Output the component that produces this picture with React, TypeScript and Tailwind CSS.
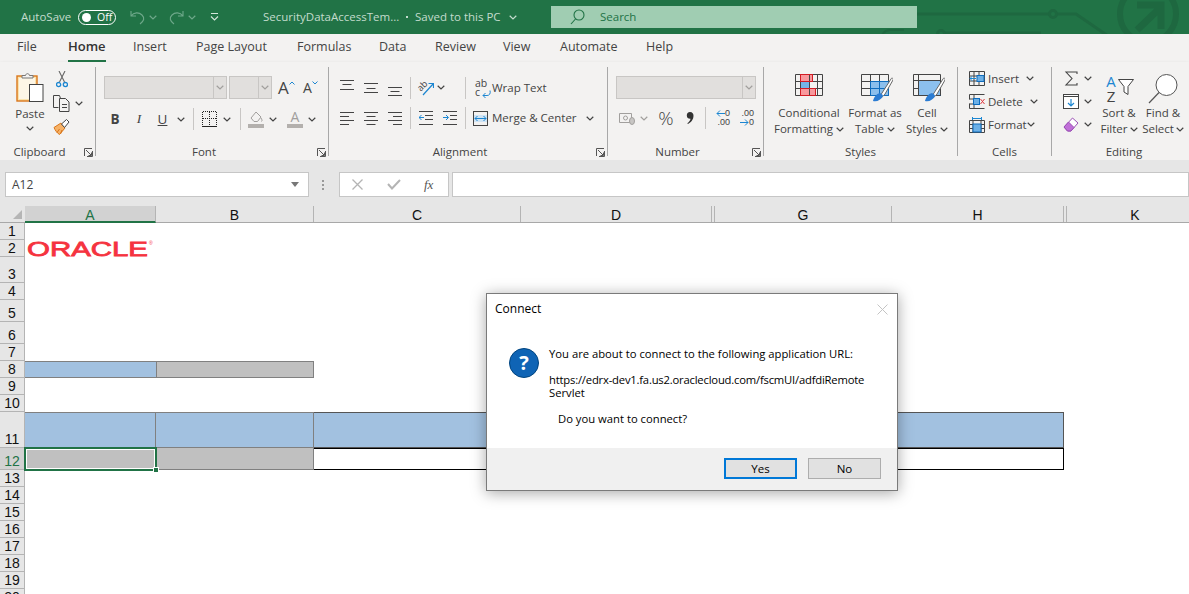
import type { ReactNode } from "react";

const UI = "font-['Open_Sans','Noto_Sans',sans-serif]";
const GRID = "font-['Liberation_Sans',Arial,sans-serif]";

function Chev({ className = "", color = "#444" }: { className?: string; color?: string }) {
  return (
    <span className={`flex shrink-0 items-center justify-center ${className}`}>
      <svg width="8" height="5" viewBox="0 0 8 5" fill="none">
        <path d="M.7.8 4 4l3.3-3.2" stroke={color} strokeWidth="1.2" />
      </svg>
    </span>
  );
}

function VSep({ className = "" }: { className?: string }) {
  return <span className={`h-[22px] w-px shrink-0 bg-[#c8c6c4] ${className}`} />;
}

function Launcher() {
  return (
    <svg width="9" height="9" viewBox="0 0 9 9" fill="none" stroke="#555">
      <path d="M.5 8V.5H8M8.5 3v5.5H3M2 2l5 5M4.500 7.500h3v-3" />
    </svg>
  );
}

function Group({
  className,
  label,
  launcher,
  children,
  last,
  footerClass = "",
}: {
  className: string;
  label: string;
  launcher?: boolean;
  children: ReactNode;
  last?: boolean;
  footerClass?: string;
}) {
  return (
    <div className={`flex h-[89px] shrink-0 flex-col ${last ? "" : "border-r border-[#a8a8a8]"} ${className}`}>
      <div className="h-[77px] shrink-0">{children}</div>
      <div className={`flex h-[16px] shrink-0 items-center text-[11.5px] leading-[16px] text-[#444] ${footerClass}`}>
        <span className="flex-1 text-center">{label}</span>
        {launcher && (
          <span className="flex w-[16px] justify-end pr-[2px]">
            <Launcher />
          </span>
        )}
      </div>
    </div>
  );
}

function Lines({ rows }: { rows: [number, number][] }) {
  return (
    <svg width="14" height="16" viewBox="0 0 14 16" stroke="#444" className="shrink-0">
      {rows.map(([y, w], i) => (
        <path key={i} d={`M${(14 - w) / 2} ${y + 0.5}h${w}`} />
      ))}
    </svg>
  );
}

function LeftLines() {
  return (
    <svg width="14" height="14" viewBox="0 0 14 14" stroke="#444" className="shrink-0">
      <path d="M0 1.500h14M0 5.500h9M0 9.500h14M0 13.500h9" />
    </svg>
  );
}

function RightLines() {
  return (
    <svg width="14" height="14" viewBox="0 0 14 14" stroke="#444" className="shrink-0">
      <path d="M0 1.500h14M5 5.500h9M0 9.500h14M5 13.500h9" />
    </svg>
  );
}

function PasteIcon() {
  return (
    <svg width="28" height="31" viewBox="0 0 28 31" fill="none">
      <rect x="1" y="4" width="20" height="25" fill="#fbe3ac" stroke="#d9761a" strokeWidth="1.4" />
      <rect x="3" y="6" width="16" height="21" fill="#fdf6e6" />
      <path d="M6 6V3.500h3.500C10 1 13 1 13.500 3.500H17V6z" fill="#f3f2f1" stroke="#777" />
      <rect x="13.500" y="12.500" width="13.500" height="17" fill="#fff" stroke="#444" />
    </svg>
  );
}

function CutIcon() {
  return (
    <svg width="12" height="17" viewBox="0 0 12 17" fill="none">
      <path d="M3 0l5.500 11M9 0 3.500 11" stroke="#666" strokeWidth="1.1" />
      <circle cx="2.600" cy="13.600" r="2.100" stroke="#1c86d1" strokeWidth="1.3" />
      <circle cx="9.400" cy="13.600" r="2.100" stroke="#1c86d1" strokeWidth="1.3" />
    </svg>
  );
}

function CopyIcon() {
  return (
    <svg width="17" height="17" viewBox="0 0 17 17" fill="none" stroke="#444">
      <path d="M5.500 12.500h-5V.5h6l1 3" />
      <path d="M6.500 3.500h6l3.500 3.500v9.500H6.500z" fill="#f3f2f1" />
      <path d="M9 9.500h5M9 12.500h5" />
    </svg>
  );
}

function PainterIcon() {
  return (
    <svg width="17" height="16" viewBox="0 0 17 16" fill="none">
      <path d="M1 8.500 8 4l4 5-5.500 6.500C4 14 2 11 1 8.500z" fill="#f7b267" stroke="#d9761a" />
      <path d="M4 13.500 6.500 10M7.500 15 9 11" stroke="#d9761a" />
      <path d="m8.500 5 5-4.500 2.500 2.500-4.500 5.500z" fill="#fff" stroke="#444" />
    </svg>
  );
}

function ClipboardGroup() {
  return (
    <Group className="w-[96px]" label="Clipboard" launcher>
      <div className="flex">
        <div className="ml-[14px] flex w-[32px] flex-col items-center pt-[5px] text-[11.5px] text-[#444]">
          <PasteIcon />
          <span className="mt-[3px] leading-[16px]">Paste</span>
          <Chev className="mt-[3px] h-[6px]" />
        </div>
        <div className="ml-[7px] flex w-[40px] flex-col">
          <div className="flex h-[24px] w-[17px] items-center justify-center">
            <CutIcon />
          </div>
          <div className="flex h-[24px] items-center">
            <CopyIcon />
            <Chev className="ml-[4px] w-[10px]" />
          </div>
          <div className="flex h-[24px] items-center">
            <PainterIcon />
          </div>
        </div>
      </div>
    </Group>
  );
}

function Combo({ className, drop }: { className: string; drop: string }) {
  return (
    <div className={`flex h-[23px] shrink-0 border border-[#c8c6c4] bg-[#e1dfdd] ${className}`}>
      <span className="flex-1" />
      <span className={`flex items-center justify-center border-l border-[#c8c6c4] ${drop}`}>
        <Chev color="#a19f9d" />
      </span>
    </div>
  );
}

function FontGroup() {
  return (
    <Group className="w-[233px]" label="Font" launcher>
      <div className="flex pl-[8px] pt-[9px]">
        <Combo className="w-[123px]" drop="w-[13px]" />
        <Combo className="ml-[2px] w-[43px]" drop="w-[13px]" />
        <span className="relative ml-[6px] w-[17px] text-[17px] leading-[23px] text-[#444]">
          A
          <svg width="6" height="4" viewBox="0 0 6 4" fill="none" stroke="#1c86d1" className="absolute right-[0px] top-[5px]">
            <path d="M.5 3.500 3 1l2.500 2.500" />
          </svg>
        </span>
        <span className="relative ml-[8px] w-[14px] text-[14px] leading-[24px] text-[#444]">
          A
          <svg width="6" height="4" viewBox="0 0 6 4" fill="none" stroke="#1c86d1" className="absolute right-[-1px] top-[5px]">
            <path d="M.5.5 3 3 5.500.5" />
          </svg>
        </span>
      </div>
      <div className="mt-[8px] flex h-[22px] items-center pl-[7px] text-[13.5px] text-[#444]">
        <span className="w-[24px] text-center font-bold">B</span>
        <span className="w-[24px] text-center font-['Liberation_Serif',serif] italic">I</span>
        <span className="w-[23px] text-center underline">U</span>
        <Chev className="w-[14px]" />
        <VSep className="ml-[5px]" />
        <svg width="15" height="16" viewBox="0 0 15 16" fill="none" stroke="#222" strokeDasharray="1 1" shapeRendering="crispEdges" className="ml-[8px] shrink-0">
          <path d="M.5.5h14M.5.5v14M14.5.5v14M.5 7.500h14M7.500.5v14" />
          <path d="M0 15.500h15" strokeDasharray="none" />
        </svg>
        <Chev className="ml-[5px] w-[10px]" />
        <VSep className="ml-[8px]" />
        <svg width="16" height="18" viewBox="0 0 16 18" fill="none" className="ml-[7px] shrink-0">
          <path d="M3 8 8 2l5 5-3.500 4.500H6z" stroke="#a19f9d" />
          <path d="M13 8c1 1.500 1.500 3 .5 3.500" stroke="#a19f9d" />
          <rect y="14" width="16" height="4" fill="#b3b0ad" />
        </svg>
        <Chev className="ml-[4px] w-[10px]" />
        <span className="relative ml-[9px] flex h-[18px] w-[16px] shrink-0 flex-col items-center">
          <span className="text-[14px] leading-[14px] text-[#a19f9d]">A</span>
          <span className="h-[4px] w-[16px] bg-[#b3b0ad]" />
        </span>
        <Chev className="ml-[4px] w-[10px]" />
      </div>
    </Group>
  );
}

function AlignmentGroup() {
  return (
    <Group className="w-[279px]" label="Alignment" launcher>
      <div className="flex h-[32px] items-center pl-[11px] pt-[9px] text-[11.5px] text-[#444]">
        <Lines rows={[[0, 14], [4, 9], [9, 14]]} />
        <span className="ml-[10px] shrink-0">
          <Lines rows={[[3, 14], [8, 9], [12, 14]]} />
        </span>
        <span className="ml-[10px] shrink-0">
          <Lines rows={[[7, 14], [11, 9], [15, 14]]} />
        </span>
        <VSep className="ml-[8px]" />
        <span className="relative ml-[7px] h-[16px] w-[16px] shrink-0">
          <span className="absolute left-[-1px] top-[1px] -rotate-45 text-[9px] leading-[10px] text-[#444]">ab</span>
          <svg width="16" height="16" viewBox="0 0 16 16" fill="none" className="absolute left-0 top-0">
            <path d="M5 15 15 4M10.500 3.500H15.500V8" stroke="#1c86d1" strokeWidth="1.2" />
          </svg>
        </span>
        <Chev className="ml-[2px] w-[10px]" />
        <VSep className="ml-[19px]" />
        <span className="relative ml-[9px] h-[18px] w-[15px] shrink-0 text-[10.5px] leading-[9px] text-[#444]">
          <span className="block">ab</span>
          <span className="block">c</span>
          <svg width="9" height="8" viewBox="0 0 9 8" fill="none" stroke="#1c86d1" className="absolute bottom-[-1px] right-[-1px]">
            <path d="M8 .5c.8 3-.5 5-3 5H1M3.500 3 1 5.500 3.500 8" />
          </svg>
        </span>
        <span className="ml-[2px] whitespace-nowrap">Wrap Text</span>
      </div>
      <div className="mt-[8px] flex h-[22px] items-center pl-[11px] text-[11.5px] text-[#444]">
        <LeftLines />
        <span className="ml-[10px] shrink-0">
          <svg width="14" height="14" viewBox="0 0 14 14" stroke="#444">
            <path d="M0 1.500h14M2.500 5.500h9M0 9.500h14M2.500 13.500h9" />
          </svg>
        </span>
        <span className="ml-[10px] shrink-0">
          <RightLines />
        </span>
        <VSep className="ml-[8px]" />
        <svg width="14" height="14" viewBox="0 0 14 14" fill="none" className="ml-[8px] shrink-0">
          <path d="M0 .5h14M6 4.500h8M6 8.500h8M0 13.500h14" stroke="#444" />
          <path d="M5 6.500H0M2.500 4 0 6.500 2.500 9" stroke="#1c86d1" />
        </svg>
        <svg width="14" height="14" viewBox="0 0 14 14" fill="none" className="ml-[10px] shrink-0">
          <path d="M0 .5h14M7 4.500h7M7 8.500h7M0 13.500h14" stroke="#444" />
          <path d="M0 6.500h5M3 4l2.500 2.500L3 9" stroke="#1c86d1" />
        </svg>
        <VSep className="ml-[8px]" />
        <svg width="15" height="15" viewBox="0 0 15 15" fill="none" className="ml-[7px] shrink-0">
          <rect x=".5" y=".5" width="14" height="14" stroke="#444" />
          <rect x="1" y="4" width="13" height="7" fill="#cfe4f5" />
          <path d="M2 7.500h11M4.500 5 2 7.500 4.500 10M10.500 5 13 7.500 10.500 10" stroke="#1c86d1" />
        </svg>
        <span className="ml-[4px] w-[85px] shrink-0 whitespace-nowrap">Merge &amp; Center</span>
        <Chev className="ml-[8px] w-[10px]" />
      </div>
    </Group>
  );
}

function NumberGroup() {
  return (
    <Group className="w-[156px]" label="Number" launcher>
      <div className="flex pl-[8px] pt-[9px]">
        <Combo className="w-[140px]" drop="w-[13px]" />
      </div>
      <div className="mt-[8px] flex h-[22px] items-center pl-[11px] text-[#444]">
        <svg width="16" height="14" viewBox="0 0 16 14" fill="none" stroke="#a19f9d" className="shrink-0">
          <path d="M.5 2.500h12v9H.5z" />
          <circle cx="6.500" cy="7" r="2" />
          <ellipse cx="13" cy="10" rx="2.500" ry="3.500" fill="#c8c6c4" />
        </svg>
        <Chev className="ml-[4px] w-[10px]" color="#a19f9d" />
        <span className="ml-[9px] flex w-[16px] justify-center text-[19px] font-light leading-[20px]">%</span>
        <svg width="12" height="14" viewBox="0 0 12 14" className="ml-[10px] shrink-0">
          <path d="M6 1c2.500 0 3.500 1.800 3.500 3.800C9.500 8.500 7 11.500 4 13l-.7-.8c2-1.300 3-2.800 3.200-4.400C4.500 8 2.800 6.800 2.800 4.500 2.800 2.500 4 1 6 1z" fill="#333" />
        </svg>
        <VSep className="ml-[9px]" />
        <span className="relative ml-[6px] flex w-[18px] shrink-0 flex-col items-end font-['Liberation_Sans',sans-serif] text-[9px] leading-[9px]">
          <span className="flex items-center">
            <svg width="9" height="7" viewBox="0 0 9 7" fill="none" stroke="#1c86d1">
              <path d="M9 3.500H1M4 .5l-3 3 3 3" />
            </svg>
            0
          </span>
          <span>.00</span>
        </span>
        <span className="relative ml-[6px] flex w-[18px] shrink-0 flex-col items-end font-['Liberation_Sans',sans-serif] text-[9px] leading-[9px]">
          <span>.00</span>
          <span className="flex items-center">
            <svg width="9" height="7" viewBox="0 0 9 7" fill="none" stroke="#1c86d1">
              <path d="M0 3.500h8M5 .5l3 3-3 3" />
            </svg>
            0
          </span>
        </span>
      </div>
    </Group>
  );
}

function CondIcon() {
  return (
    <svg width="28" height="22" viewBox="0 0 28 22" fill="none">
      <rect x="5.500" y=".5" width="12" height="7" fill="#f8989c" />
      <rect x="5.500" y="14.500" width="15" height="7" fill="#f8989c" />
      <rect x="5.500" y="7.500" width="9" height="7" fill="#74b5e8" />
      <path d="M.5.5h27v21H.5zM.5 7.500h27M.5 14.500h27M5.500.5v21M14.500.5v21M22.500.5v21" stroke="#444" />
      <rect x="5.500" y=".5" width="12" height="7" stroke="#d21c24" />
      <rect x="5.500" y="14.500" width="15" height="7" stroke="#d21c24" />
    </svg>
  );
}

function BrushOver() {
  return (
    <>
      <path d="M14 24c4-1 6-3 7-5l9-14c1-2 2.500-.5 2 1l-8 14c-2 3-5 5-10 4z" fill="#fff" stroke="#666" />
      <path d="M12 27c1-4 3-7 7-8 2 1 3 2 3 3-2 4-6 6-10 5z" fill="#2b7cd3" />
    </>
  );
}

function TableIcon() {
  return (
    <svg width="32" height="28" viewBox="0 0 32 28" fill="none" className="ml-[4px]">
      <rect x="9.500" y="7.500" width="18" height="14" fill="#8cbfec" />
      <path d="M.5.5h27v21H.5zM.500 7.500h9M.500 14.500h9M9.500.500v14M18.500.500v7" stroke="#444" />
      <path d="M9.500 7.500h18v14h-18zM9.500 14.500h18M18.500 7.500v14" stroke="#0f6cbd" />
      <BrushOver />
    </svg>
  );
}

function CellStylesIcon() {
  return (
    <svg width="32" height="28" viewBox="0 0 32 28" fill="none" className="ml-[4px]">
      <rect x="5.500" y="6.500" width="22" height="15" fill="#8cc0ee" stroke="#0f6cbd" />
      <path d="M.5.5h27v21H.5zM.500 6.500h27M.500 14.500h5M5.500.500v21" stroke="#444" />
      <BrushOver />
    </svg>
  );
}

function StyleCol({ className, icon, top, bottom }: { className: string; icon: ReactNode; top: string; bottom: string }) {
  return (
    <div className={`flex shrink-0 flex-col items-center pt-[7px] text-[11.5px] leading-[16px] text-[#444] ${className}`}>
      <div className="flex h-[31px] w-full justify-center">{icon}</div>
      <span className="whitespace-nowrap">{top}</span>
      <span className="flex items-center whitespace-nowrap">
        {bottom}
        <Chev className="ml-[3px]" />
      </span>
    </div>
  );
}

function StylesGroup() {
  return (
    <Group className="w-[194px]" label="Styles">
      <div className="flex pl-[8px]">
        <StyleCol className="w-[74px]" icon={<CondIcon />} top="Conditional" bottom="Formatting" />
        <StyleCol className="w-[58px]" icon={<TableIcon />} top="Format as" bottom="Table" />
        <StyleCol className="w-[46px]" icon={<CellStylesIcon />} top="Cell" bottom="Styles" />
      </div>
    </Group>
  );
}

function CellsGroup() {
  return (
    <Group className="w-[94px]" label="Cells">
      <div className="flex flex-col pl-[11px] text-[11.5px] text-[#444]">
        <div className="flex h-[23px] items-center">
          <svg width="16" height="15" viewBox="0 0 16 15" fill="none" className="shrink-0">
            <path d="M.5.5h15v14H.5zM.5 5h15M.5 10h15M5 .5v14M10 .5v14" stroke="#444" />
            <rect x="8" y="4.500" width="7" height="6" fill="#6db0e6" stroke="#0f6cbd" />
            <path d="M7 7.500H1M3.500 5 1 7.500 3.500 10" stroke="#1c86d1" fill="#fff" />
          </svg>
          <span className="ml-[3px] w-[34px] whitespace-nowrap">Insert</span>
          <Chev className="ml-[3px] w-[10px]" />
        </div>
        <div className="flex h-[23px] items-center">
          <svg width="16" height="15" viewBox="0 0 16 15" fill="none" className="shrink-0">
            <path d="M.5.5h15M.5 14.500h15M.5.500v5M.500 9.500v5M5 .5v4M5 10.500v4M.500 5h4M.500 10h4" stroke="#444" />
            <rect x="4.500" y="4.500" width="6" height="6" fill="#6db0e6" stroke="#0f6cbd" />
            <path d="m11.500 5 4 5M15.500 5l-4 5" stroke="#e0393e" />
          </svg>
          <span className="ml-[3px] w-[38px] whitespace-nowrap">Delete</span>
          <Chev className="ml-[3px] w-[10px]" />
        </div>
        <div className="flex h-[23px] items-center">
          <svg width="16" height="16" viewBox="0 0 16 16" fill="none" className="shrink-0">
            <path d="M.5 3.500h15v12H.5zM.500 7.500h15M.500 11.500h15M4 3.500v12M12 3.500v12" stroke="#444" />
            <rect x="4" y="7" width="8" height="8" fill="#6db0e6" stroke="#0f6cbd" />
            <path d="M3 1.500h10M3.500 0v3M12.500 0v3" stroke="#1c86d1" />
          </svg>
          <span className="ml-[3px] w-[38px] whitespace-nowrap">Format</span>
          <Chev className="w-[10px]" />
        </div>
      </div>
    </Group>
  );
}

function EditingGroup() {
  return (
    <Group className="w-[137px]" label="Editing" last footerClass="pl-[7px]">
      <div className="flex">
        <div className="flex w-[41px] shrink-0 flex-col pl-[11px]">
          <div className="flex h-[23px] items-center">
            <svg width="16" height="15" viewBox="0 0 16 15" fill="none" stroke="#444" strokeWidth="1.1">
              <path d="M14 3V1H3l6 6.500L3 14h11v-2" />
            </svg>
            <Chev className="ml-[4px] w-[10px]" />
          </div>
          <div className="flex h-[23px] items-center">
            <svg width="16" height="15" viewBox="0 0 16 15" fill="none">
              <rect x=".5" y=".5" width="15" height="14" fill="#fff" stroke="#444" />
              <path d="M.5 2.500h15" stroke="#444" />
              <path d="M8 5v7M5 9l3 3 3-3" stroke="#1c86d1" strokeWidth="1.2" />
            </svg>
            <Chev className="ml-[4px] w-[10px]" />
          </div>
          <div className="flex h-[23px] items-center">
            <svg width="16" height="15" viewBox="0 0 16 15" fill="none">
              <path d="M9.500 1 15 6l-7 8H4.500L1 10z" fill="#fff" stroke="#9a4fb5" />
              <path d="M5.500 5 1 10l3.500 4H8l3-3.500z" fill="#c06fd8" stroke="#9a4fb5" />
            </svg>
            <Chev className="ml-[4px] w-[10px]" />
          </div>
        </div>
        <div className="flex w-[52px] shrink-0 flex-col items-center pt-[5px] text-[11.5px] leading-[16px] text-[#444]">
          <div className="flex h-[33px] items-center">
            <span className="flex w-[14px] flex-col items-center text-[15px] leading-[15px]">
              <span className="text-[#1c86d1]">A</span>
              <span>Z</span>
            </span>
            <svg width="16" height="16" viewBox="0 0 16 16" fill="none" stroke="#444" className="mt-[-4px]">
              <path d="M.5.5h15L10 7.500v8L6 13V7.500z" fill="#fff" />
            </svg>
          </div>
          <span>Sort &amp;</span>
          <span className="flex items-center whitespace-nowrap">
            Filter
            <Chev className="ml-[2px]" />
          </span>
        </div>
        <div className="flex w-[36px] shrink-0 flex-col items-center pt-[5px] text-[11.5px] leading-[16px] text-[#444]">
          <div className="flex h-[33px] items-center">
            <svg width="30" height="30" viewBox="0 0 30 30" fill="none" stroke="#555">
              <circle cx="18.500" cy="11" r="10.500" fill="#fff" />
              <path d="M11 18.500 1 29" strokeWidth="1.2" />
            </svg>
          </div>
          <span className="whitespace-nowrap">Find &amp;</span>
          <span className="flex items-center whitespace-nowrap">
            Select
            <Chev className="ml-[2px]" />
          </span>
        </div>
      </div>
    </Group>
  );
}

function TitleBar() {
  return (
    <div className="relative flex h-[34px] items-center overflow-hidden bg-[#217346] pl-[21px] text-[11.5px] text-[#c3dccd]">
      <svg width="1189" height="34" viewBox="0 0 1189 34" fill="none" stroke="#1e6840" strokeWidth="3" className="absolute left-0 top-0">
        <path d="M917 14h132M1057 14h19l32 22" />
        <circle cx="1053" cy="14" r="3.500" />
        <path d="M945 33h96" />
        <circle cx="941" cy="34" r="3.500" />
        <path d="M880 40c2-7 6-10 10-10h14" strokeWidth="2" />
        <circle cx="1148" cy="14" r="28" strokeWidth="6" />
        <path d="M1137 30l22-21M1137 5h24v24" strokeWidth="7" />
      </svg>
      <span className="relative w-[50px] shrink-0 whitespace-nowrap">AutoSave</span>
      <span className="relative ml-[7px] flex h-[15px] w-[38px] shrink-0 items-center rounded-full border border-white pl-[3px] text-[10.5px] text-white">
        <span className="h-[9px] w-[9px] rounded-full bg-white" />
        <span className="ml-[6px] leading-none">Off</span>
      </span>
      <svg width="15" height="15" viewBox="0 0 15 15" fill="none" stroke="#6ea88a" strokeWidth="1.1" className="relative ml-[14px] shrink-0">
        <path d="M1 1v5h5M1 6c3-4 8-4 11-1 3 3 2 6-2 9" />
      </svg>
      <Chev className="relative ml-[4px] w-[8px]" color="#6ea88a" />
      <svg width="15" height="15" viewBox="0 0 15 15" fill="none" stroke="#6ea88a" strokeWidth="1.1" className="relative ml-[12px] shrink-0">
        <path d="M14 1v5H9M14 6c-3-4-8-4-11-1-3 3-2 6 2 9" />
      </svg>
      <Chev className="relative ml-[4px] w-[8px]" color="#6ea88a" />
      <svg width="9" height="8" viewBox="0 0 9 8" fill="none" stroke="#d5e6db" className="relative ml-[14px] shrink-0">
        <path d="M1 .5h7M1 3.500l3.500 3.500L8 3.500" strokeWidth="1.1" />
      </svg>
      <span className="relative ml-[44px] w-[132px] shrink-0 whitespace-nowrap">SecurityDataAccessTem...</span>
      <span className="relative ml-[11px] h-[2px] w-[2px] shrink-0 bg-[#c3dccd]" />
      <span className="relative ml-[7px] w-[87px] shrink-0 whitespace-nowrap">Saved to this PC</span>
      <Chev className="relative ml-[6px] w-[9px]" color="#c3dccd" />
      <div className="relative ml-[34px] flex h-[22px] w-[366px] shrink-0 items-center bg-[#a0cdb2] pl-[19px] text-[#217346]">
        <svg width="15" height="16" viewBox="0 0 15 16" fill="none" stroke="#217346" strokeWidth="1.1">
          <circle cx="9" cy="6" r="5" />
          <path d="M5.500 10 1 15" />
        </svg>
        <span className="ml-[15px]">Search</span>
      </div>
    </div>
  );
}

const tabs: { name: string; w: string }[] = [
  { name: "File", w: "w-[51px]" },
  { name: "Home", w: "w-[65px]" },
  { name: "Insert", w: "w-[63px]" },
  { name: "Page Layout", w: "w-[101px]" },
  { name: "Formulas", w: "w-[82px]" },
  { name: "Data", w: "w-[56px]" },
  { name: "Review", w: "w-[68px]" },
  { name: "View", w: "w-[57px]" },
  { name: "Automate", w: "w-[86px]" },
  { name: "Help", w: "w-[50px]" },
];

function Tabs() {
  return (
    <div className="flex h-[28px] bg-[#f3f2f1] pl-[17px] text-[12.5px] text-[#444]">
      {tabs.map((tab) => (
        <div key={tab.name} className={`flex shrink-0 ${tab.w}`}>
          <span
            className={`flex h-[28px] items-center whitespace-nowrap border-b-[2px] ${tab.name === "Home" ? "border-[#217346] text-[13px] font-semibold text-[#333]" : "border-transparent"}`}
          >
            {tab.name}
          </span>
        </div>
      ))}
    </div>
  );
}

function Ribbon() {
  return (
    <div className="flex h-[98px] bg-[#f3f2f1] pt-[5px] shadow-[0_2px_4px_rgba(0,0,0,0.18)]">
      <ClipboardGroup />
      <FontGroup />
      <AlignmentGroup />
      <NumberGroup />
      <StylesGroup />
      <CellsGroup />
      <EditingGroup />
    </div>
  );
}

function FormulaBar() {
  return (
    <div className="flex h-[46px] items-start bg-[#e6e6e6] pl-[5px] pt-[12px]">
      <div className={`flex h-[25px] w-[304px] shrink-0 items-center border border-[#c6c6c6] bg-white pl-[6px] pr-[9px] text-[12px] text-[#444] ${UI}`}>
        <span className="flex-1">A12</span>
        <span className="h-0 w-0 border-x-[4px] border-t-[5px] border-x-transparent border-t-[#777]" />
      </div>
      <div className="ml-[12px] flex h-[25px] w-[4px] shrink-0 flex-col items-center justify-center gap-[2px]">
        <span className="h-[2px] w-[2px] bg-[#999]" />
        <span className="h-[2px] w-[2px] bg-[#999]" />
        <span className="h-[2px] w-[2px] bg-[#999]" />
      </div>
      <div className="ml-[14px] flex h-[25px] w-[110px] shrink-0 items-center border border-[#c6c6c6] bg-white pl-[12px]">
        <svg width="11" height="11" viewBox="0 0 11 11" stroke="#b4b4b4" strokeWidth="1.3" className="shrink-0">
          <path d="m.5.5 10 10M10.500.5l-10 10" />
        </svg>
        <svg width="14" height="11" viewBox="0 0 14 11" fill="none" stroke="#b4b4b4" strokeWidth="2" className="ml-[24px] shrink-0">
          <path d="m1 5 4 4.500L13 1" />
        </svg>
        <span className="ml-[23px] font-['Liberation_Serif',serif] text-[13px] italic text-[#555]">fx</span>
      </div>
      <div className="ml-[3px] h-[25px] flex-1 border border-[#c6c6c6] bg-white" />
    </div>
  );
}

const columns: { name: string; w: string; active?: boolean }[] = [
  { name: "A", w: "w-[131px]", active: true },
  { name: "B", w: "w-[158px]" },
  { name: "C", w: "w-[207px]" },
  { name: "D", w: "w-[191px]" },
  { name: "", w: "w-[3px]" },
  { name: "G", w: "w-[177px]" },
  { name: "H", w: "w-[172px]" },
  { name: "", w: "w-[3px]" },
  { name: "K", w: "w-[137px]" },
];

function ColumnHeader() {
  return (
    <div className={`flex h-[17px] border-b border-[#a8a8a8] bg-[#e6e6e6] text-[14px] leading-[18px] text-[#111] ${GRID}`}>
      <div className="flex w-[25px] shrink-0 items-end justify-end pb-[3px] pr-[3px]">
        <span className="h-0 w-0 border-b-[9px] border-l-[9px] border-b-[#b5b5b5] border-l-transparent" />
      </div>
      {columns.map((col, i) => (
        <div
          key={i}
          className={`shrink-0 border-r border-[#b4b4b4] text-center ${col.w} ${col.active ? "h-[17px] border-b-[2px] border-b-[#217346] bg-[#d2d2d2] text-[#217346]" : ""}`}
        >
          {col.name}
        </div>
      ))}
    </div>
  );
}

const rows: { n: number; h: string }[] = [
  { n: 1, h: "h-[17px]" },
  { n: 2, h: "h-[17px]" },
  { n: 3, h: "h-[26px]" },
  { n: 4, h: "h-[17px]" },
  { n: 5, h: "h-[22px]" },
  { n: 6, h: "h-[22px]" },
  { n: 7, h: "h-[17px]" },
  { n: 8, h: "h-[17px]" },
  { n: 9, h: "h-[17px]" },
  { n: 10, h: "h-[17px]" },
  { n: 11, h: "h-[36px]" },
  { n: 12, h: "h-[22px]" },
  { n: 13, h: "h-[17px]" },
  { n: 14, h: "h-[17px]" },
  { n: 15, h: "h-[17px]" },
  { n: 16, h: "h-[17px]" },
  { n: 17, h: "h-[17px]" },
  { n: 18, h: "h-[17px]" },
  { n: 19, h: "h-[17px]" },
  { n: 20, h: "h-[17px]" },
];

function RowCells({ n }: { n: number }) {
  if (n === 2) {
    return (
      <svg width="130" height="17" viewBox="0 0 130 17" className="ml-[2px] overflow-visible">
        <text x="0" y="16" fontFamily="Liberation Sans" fontSize="21" fill="#f5333f" stroke="#f5333f" strokeWidth="0.8" textLength="121" lengthAdjust="spacingAndGlyphs">
          ORACLE
        </text>
        <text x="122" y="5" fontFamily="Liberation Sans" fontSize="5" fill="#f5333f">
          ®
        </text>
      </svg>
    );
  }
  if (n === 8) {
    return (
      <>
        <div className="w-[131px] shrink-0 border-y border-[#808080] bg-[#a2c1e0]" />
        <div className="w-[158px] shrink-0 border border-[#808080] bg-[#c0c0c0]" />
      </>
    );
  }
  if (n === 11) {
    return (
      <>
        <div className="w-[131px] shrink-0 border-y border-r border-[#808080] bg-[#a2c1e0]" />
        <div className="w-[158px] shrink-0 border-y border-r border-[#808080] bg-[#a2c1e0]" />
        <div className="w-[750px] shrink-0 border-y border-r border-[#555] bg-[#a2c1e0]" />
      </>
    );
  }
  if (n === 12) {
    return (
      <>
        <div className="relative w-[131px] shrink-0 bg-[#c0c0c0]">
          <div className="absolute inset-x-[-1px] inset-y-[-1px] border-[2px] border-[#217346]">
            <div className="h-full w-full border border-white" />
          </div>
          <span className="absolute bottom-[-3px] right-[-3px] h-[6px] w-[6px] border border-white bg-[#217346]" />
        </div>
        <div className="w-[158px] shrink-0 border-b border-r border-[#808080] bg-[#c0c0c0]" />
        <div className="w-[750px] shrink-0 border-y border-r border-black bg-white" />
      </>
    );
  }
  return null;
}

function Sheet() {
  return (
    <div className="bg-white">
      <ColumnHeader />
      {rows.map((row) => (
        <div key={row.n} className={`flex ${row.h}`}>
          <div
            className={`flex w-[25px] shrink-0 items-end justify-center border-b border-r border-[#b4b4b4] text-[14px] leading-[16px] ${GRID} ${row.n === 12 ? "border-r-[#217346] bg-[#d2d2d2] text-[#217346]" : "bg-[#e6e6e6] text-[#111]"}`}
          >
            {row.n}
          </div>
          <RowCells n={row.n} />
        </div>
      ))}
    </div>
  );
}

function ConnectDialog() {
  return (
    <div className={`absolute left-[486px] top-[293px] flex h-[198px] w-[412px] flex-col border border-[#7a7a7a] bg-white text-[11.25px] text-black shadow-[0_2px_14px_rgba(0,0,0,0.35)] ${UI}`}>
      <div className="flex h-[30px] items-center justify-between pl-[8px] pr-[9px]">
        <span className="text-[12px]">Connect</span>
        <svg width="11" height="11" viewBox="0 0 11 11" stroke="#c4c4c4">
          <path d="m.5.5 10 10M10.500.5l-10 10" />
        </svg>
      </div>
      <div className="flex flex-1 pl-[22px] pt-[23px]">
        <span className="mt-[1px] flex h-[30px] w-[30px] shrink-0 items-center justify-center rounded-full border border-[#00447f] bg-[#0f64b5] text-[20px] font-bold leading-none text-white">
          ?
        </span>
        <div className="ml-[10px] flex w-[325px] flex-col leading-[13px]">
          <span className="h-[26px] whitespace-nowrap">You are about to connect to the following application URL:</span>
          <span className="whitespace-nowrap tracking-[-0.2px]">https://edrx-dev1.fa.us2.oraclecloud.com/fscmUI/adfdiRemote</span>
          <span>Servlet</span>
          <span className="ml-[9px] mt-[13px]">Do you want to connect?</span>
        </div>
      </div>
      <div className="flex h-[42px] items-start justify-end gap-[11px] bg-[#f0f0f0] pr-[16px] pt-[10px] text-[11.5px]">
        <button className="h-[21px] w-[73px] border-[2px] border-[#0078d7] bg-[#e1e1e1] leading-none">Yes</button>
        <button className="h-[21px] w-[73px] border border-[#adadad] bg-[#e1e1e1] leading-none">No</button>
      </div>
    </div>
  );
}

export default function App() {
  return (
    <div className="relative h-[594px] w-[1189px] overflow-hidden bg-white">
      <div className={UI}>
        <TitleBar />
        <Tabs />
        <Ribbon />
      </div>
      <FormulaBar />
      <Sheet />
      <ConnectDialog />
    </div>
  );
}
